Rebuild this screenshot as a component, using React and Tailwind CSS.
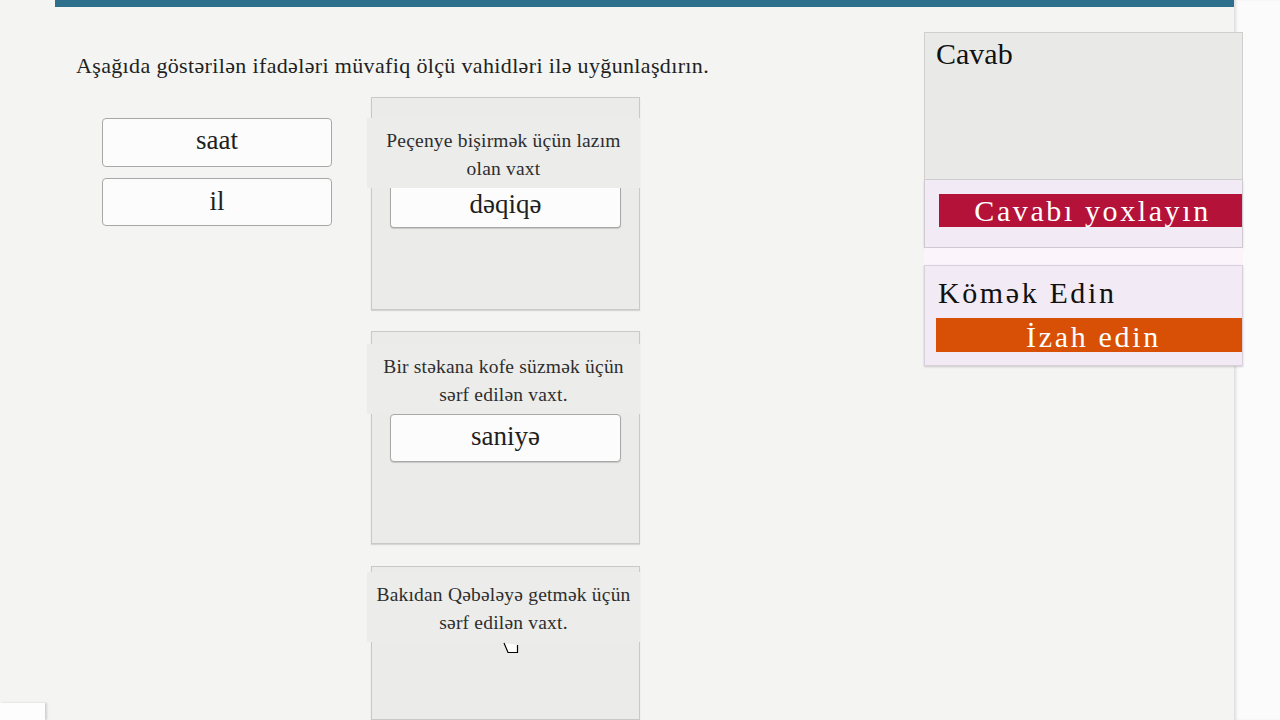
import React from "react";

const serif = { fontFamily: '"Liberation Serif", "Times New Roman", serif' };

function Chip({ children, className = "" }) {
  return (
    <div
      className={`flex items-center justify-center bg-[#fbfcfb] text-[27px] text-[#1f1f1f] ${className}`}
    >
      {children}
    </div>
  );
}

function DropZone({ lines, bandOffset, height, chip, chipClass, children }) {
  return (
    <div
      className={`relative w-[269px] border border-[#c9c9c8] bg-[#ebebea] shadow-[0_1px_1px_rgba(0,0,0,0.12)] ${height}`}
    >
      <div className={`${bandOffset} -ml-[5px] mr-[-1px] flex h-[70px] flex-col items-center justify-center bg-[#ececeb] pt-[3px] text-[19.5px] leading-[28px] tracking-[0.2px] text-[#2e2e2e]`}>
        {lines.map((l) => (
          <div key={l}>{l}</div>
        ))}
      </div>
      {chip && (
        <Chip className={`ml-[18px] w-[231px] ${chipClass}`}>{chip}</Chip>
      )}
      {children}
    </div>
  );
}

export default function App() {
  return (
    <div
      className="relative flex h-[720px] w-[1280px] overflow-hidden bg-[#f4f5f3]"
      style={serif}
    >
      {/* left gutter */}
      <div className="w-[55px] shrink-0 bg-[#f4f5f3]" />

      {/* main sheet */}
      <div className="relative z-10 flex w-[1179px] shrink-0 flex-col bg-[#f4f5f3]">
        <div className="h-[7px] bg-[#2e6f8e]" />
        <div className="flex">
          {/* exercise */}
          <div className="flex-1 pl-[21px]">
            <div className="mt-[44px] text-[22px] leading-[29px] tracking-[0.35px] text-[#222]">
              Aşağıda göstərilən ifadələri müvafiq ölçü vahidləri ilə uyğunlaşdırın.
            </div>
            <div className="mt-[17px] flex">
              <div className="ml-[26px] mt-[21px] flex w-[230px] flex-col gap-[11px]">
                <Chip className="h-[49px] rounded-[4px] border border-[#a8a8a8] pb-[4px]">saat</Chip>
                <Chip className="h-[48px] rounded-[4px] border border-[#a8a8a8] pb-[2px]">il</Chip>
              </div>
              <div className="ml-[39px] flex flex-col gap-[21px]">
                <DropZone
                  height="h-[213px]"
                  bandOffset="mt-[20px]"
                  lines={["Peçenye bişirmək üçün lazım", "olan vaxt"]}
                  chip="dəqiqə"
                  chipClass="h-[40px] rounded-b-[4px] border border-t-0 border-[#a8a8a8] pb-[6px] shadow-[0_1px_1px_rgba(0,0,0,0.15)]"
                />
                <DropZone
                  height="h-[213px]"
                  bandOffset="mt-[12px]"
                  lines={["Bir stəkana kofe süzmək üçün", "sərf edilən vaxt."]}
                  chip="saniyə"
                  chipClass="h-[48px] rounded-[4px] border border-[#a8a8a8] pb-[4px] shadow-[0_1px_1px_rgba(0,0,0,0.15)]"
                />
                <div className="mt-[1px]">
                  <DropZone
                    height="h-[154px]"
                    bandOffset="mt-[5px]"
                    lines={["Bakıdan Qəbələyə getmək üçün", "sərf edilən vaxt."]}
                  >
                    {/* drag cursor */}
                    <svg
                      className="absolute left-[131px] top-[75px]"
                      width="16"
                      height="12"
                      viewBox="0 0 16 12"
                    >
                      <polygon points="1,1 2,2 5,10.5 14.5,10.5 14.5,3" fill="#fff" />
                      <polyline
                        points="1,1 5,10.5 14.5,10.5 14.5,3"
                        fill="none"
                        stroke="#000"
                        strokeWidth="1.2"
                      />
                    </svg>
                  </DropZone>
                </div>
              </div>
            </div>
          </div>

          {/* answer panel */}
          <div className="mr-[-9px] mt-[25px] flex w-[319px] shrink-0 flex-col">
            <div className="h-[148px] border border-[#cfcfcf] bg-[#e9eae8] pl-[11px] pt-[2px] text-[30px] leading-[38px] text-[#111]">
              Cavab
            </div>
            <div className="flex h-[68px] items-start border border-t-0 border-[#cfc9d2] bg-[#f2eaf4] pl-[14px] pt-[14px] shadow-[0_1px_2px_rgba(0,0,0,0.15)]">
              <div className="flex h-[33px] flex-1 items-center justify-center bg-[#b5123a] pb-[1px] pl-[4px] text-[30px] tracking-[2.6px] text-white">
                Cavabı yoxlayın
              </div>
            </div>
            <div className="h-[17px] bg-[#fbf4fb]" />
            <div className="flex h-[101px] flex-col border border-[#d8d0da] bg-[#f2eaf4] pl-[11px] shadow-[0_1px_2px_rgba(0,0,0,0.18)]">
              <div className="mt-[8px] pl-[2px] text-[30px] leading-[37px] tracking-[2.6px] text-[#111]">
                Kömək Edin
              </div>
              <div className="mt-[7px] flex h-[34px] items-center justify-center bg-[#d84f06] pl-[9px] pt-[3px] text-[30px] tracking-[2.7px] text-white">
                İzah edin
              </div>
            </div>
          </div>
        </div>
      </div>

      {/* right margin with sheet edge shadow */}
      <div className="flex-1 bg-[#fafbfa] shadow-[inset_3px_0_3px_-1px_rgba(0,0,0,0.12)]" />

      {/* corner of a window underneath */}
      <div className="absolute bottom-0 left-0 z-20 h-[17px] w-[45px] bg-[#fdfdfd] shadow-[2px_0_2px_rgba(0,0,0,0.15)]" />
    </div>
  );
}
